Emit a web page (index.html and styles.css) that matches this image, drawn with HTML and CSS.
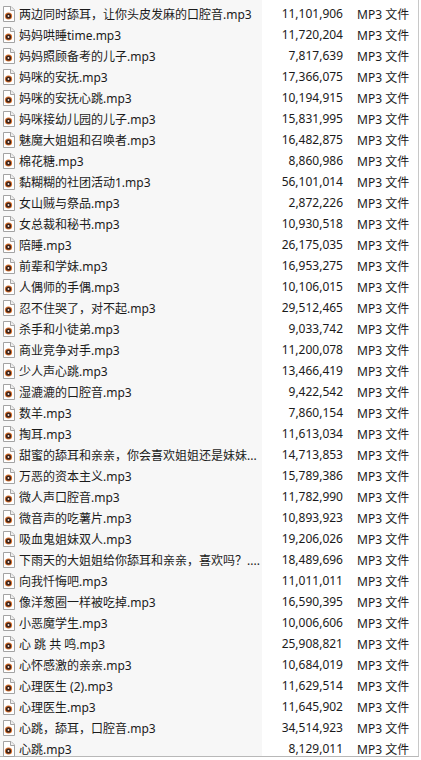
FILE: index.html
```html
<!DOCTYPE html>
<html>
<head>
<meta charset="utf-8">
<link rel="stylesheet" href="styles.css">
</head>
<body>
<svg width="0" height="0" class="defs">
  <symbol id="mp3" viewBox="0 0 16 16">
    <path d="M2.5 0.5h7.5l3.5 3.5v11.5h-11z" fill="#fff" stroke="#a3a3a3"/>
    <path d="M9.5 0.5v4h4" fill="#f0f0f0" stroke="#a3a3a3"/>
    <circle cx="7.5" cy="10" r="3.6" fill="#d8702c"/>
    <circle cx="7.5" cy="10" r="2.6" fill="#3b2219"/>
    <circle cx="7.5" cy="10" r="0.9" fill="#f4e4dc"/>
  </symbol>
</svg>
<div class="list">
  <div class="row"><div class="name"><svg class="icon" width="16" height="16"><use href="#mp3"/></svg><span class="label">两边同时舔耳，让你头皮发麻的口腔音.mp3</span></div><div class="size">11,101,906</div><div class="type">MP3 文件</div></div>
  <div class="row"><div class="name"><svg class="icon" width="16" height="16"><use href="#mp3"/></svg><span class="label">妈妈哄睡time.mp3</span></div><div class="size">11,720,204</div><div class="type">MP3 文件</div></div>
  <div class="row"><div class="name"><svg class="icon" width="16" height="16"><use href="#mp3"/></svg><span class="label">妈妈照顾备考的儿子.mp3</span></div><div class="size">7,817,639</div><div class="type">MP3 文件</div></div>
  <div class="row"><div class="name"><svg class="icon" width="16" height="16"><use href="#mp3"/></svg><span class="label">妈咪的安抚.mp3</span></div><div class="size">17,366,075</div><div class="type">MP3 文件</div></div>
  <div class="row"><div class="name"><svg class="icon" width="16" height="16"><use href="#mp3"/></svg><span class="label">妈咪的安抚心跳.mp3</span></div><div class="size">10,194,915</div><div class="type">MP3 文件</div></div>
  <div class="row"><div class="name"><svg class="icon" width="16" height="16"><use href="#mp3"/></svg><span class="label">妈咪接幼儿园的儿子.mp3</span></div><div class="size">15,831,995</div><div class="type">MP3 文件</div></div>
  <div class="row"><div class="name"><svg class="icon" width="16" height="16"><use href="#mp3"/></svg><span class="label">魅魔大姐姐和召唤者.mp3</span></div><div class="size">16,482,875</div><div class="type">MP3 文件</div></div>
  <div class="row"><div class="name"><svg class="icon" width="16" height="16"><use href="#mp3"/></svg><span class="label">棉花糖.mp3</span></div><div class="size">8,860,986</div><div class="type">MP3 文件</div></div>
  <div class="row"><div class="name"><svg class="icon" width="16" height="16"><use href="#mp3"/></svg><span class="label">黏糊糊的社团活动1.mp3</span></div><div class="size">56,101,014</div><div class="type">MP3 文件</div></div>
  <div class="row"><div class="name"><svg class="icon" width="16" height="16"><use href="#mp3"/></svg><span class="label">女山贼与祭品.mp3</span></div><div class="size">2,872,226</div><div class="type">MP3 文件</div></div>
  <div class="row"><div class="name"><svg class="icon" width="16" height="16"><use href="#mp3"/></svg><span class="label">女总裁和秘书.mp3</span></div><div class="size">10,930,518</div><div class="type">MP3 文件</div></div>
  <div class="row"><div class="name"><svg class="icon" width="16" height="16"><use href="#mp3"/></svg><span class="label">陪睡.mp3</span></div><div class="size">26,175,035</div><div class="type">MP3 文件</div></div>
  <div class="row"><div class="name"><svg class="icon" width="16" height="16"><use href="#mp3"/></svg><span class="label">前辈和学妹.mp3</span></div><div class="size">16,953,275</div><div class="type">MP3 文件</div></div>
  <div class="row"><div class="name"><svg class="icon" width="16" height="16"><use href="#mp3"/></svg><span class="label">人偶师的手偶.mp3</span></div><div class="size">10,106,015</div><div class="type">MP3 文件</div></div>
  <div class="row"><div class="name"><svg class="icon" width="16" height="16"><use href="#mp3"/></svg><span class="label">忍不住哭了，对不起.mp3</span></div><div class="size">29,512,465</div><div class="type">MP3 文件</div></div>
  <div class="row"><div class="name"><svg class="icon" width="16" height="16"><use href="#mp3"/></svg><span class="label">杀手和小徒弟.mp3</span></div><div class="size">9,033,742</div><div class="type">MP3 文件</div></div>
  <div class="row"><div class="name"><svg class="icon" width="16" height="16"><use href="#mp3"/></svg><span class="label">商业竞争对手.mp3</span></div><div class="size">11,200,078</div><div class="type">MP3 文件</div></div>
  <div class="row"><div class="name"><svg class="icon" width="16" height="16"><use href="#mp3"/></svg><span class="label">少人声心跳.mp3</span></div><div class="size">13,466,419</div><div class="type">MP3 文件</div></div>
  <div class="row"><div class="name"><svg class="icon" width="16" height="16"><use href="#mp3"/></svg><span class="label">湿漉漉的口腔音.mp3</span></div><div class="size">9,422,542</div><div class="type">MP3 文件</div></div>
  <div class="row"><div class="name"><svg class="icon" width="16" height="16"><use href="#mp3"/></svg><span class="label">数羊.mp3</span></div><div class="size">7,860,154</div><div class="type">MP3 文件</div></div>
  <div class="row"><div class="name"><svg class="icon" width="16" height="16"><use href="#mp3"/></svg><span class="label">掏耳.mp3</span></div><div class="size">11,613,034</div><div class="type">MP3 文件</div></div>
  <div class="row"><div class="name"><svg class="icon" width="16" height="16"><use href="#mp3"/></svg><span class="label">甜蜜的舔耳和亲亲，你会喜欢姐姐还是妹妹...</span></div><div class="size">14,713,853</div><div class="type">MP3 文件</div></div>
  <div class="row"><div class="name"><svg class="icon" width="16" height="16"><use href="#mp3"/></svg><span class="label">万恶的资本主义.mp3</span></div><div class="size">15,789,386</div><div class="type">MP3 文件</div></div>
  <div class="row"><div class="name"><svg class="icon" width="16" height="16"><use href="#mp3"/></svg><span class="label">微人声口腔音.mp3</span></div><div class="size">11,782,990</div><div class="type">MP3 文件</div></div>
  <div class="row"><div class="name"><svg class="icon" width="16" height="16"><use href="#mp3"/></svg><span class="label">微音声的吃薯片.mp3</span></div><div class="size">10,893,923</div><div class="type">MP3 文件</div></div>
  <div class="row"><div class="name"><svg class="icon" width="16" height="16"><use href="#mp3"/></svg><span class="label">吸血鬼姐妹双人.mp3</span></div><div class="size">19,206,026</div><div class="type">MP3 文件</div></div>
  <div class="row"><div class="name"><svg class="icon" width="16" height="16"><use href="#mp3"/></svg><span class="label">下雨天的大姐姐给你舔耳和亲亲，喜欢吗？....</span></div><div class="size">18,489,696</div><div class="type">MP3 文件</div></div>
  <div class="row"><div class="name"><svg class="icon" width="16" height="16"><use href="#mp3"/></svg><span class="label">向我忏悔吧.mp3</span></div><div class="size">11,011,011</div><div class="type">MP3 文件</div></div>
  <div class="row"><div class="name"><svg class="icon" width="16" height="16"><use href="#mp3"/></svg><span class="label">像洋葱圈一样被吃掉.mp3</span></div><div class="size">16,590,395</div><div class="type">MP3 文件</div></div>
  <div class="row"><div class="name"><svg class="icon" width="16" height="16"><use href="#mp3"/></svg><span class="label">小恶魔学生.mp3</span></div><div class="size">10,006,606</div><div class="type">MP3 文件</div></div>
  <div class="row"><div class="name"><svg class="icon" width="16" height="16"><use href="#mp3"/></svg><span class="label">心 跳 共 鸣.mp3</span></div><div class="size">25,908,821</div><div class="type">MP3 文件</div></div>
  <div class="row"><div class="name"><svg class="icon" width="16" height="16"><use href="#mp3"/></svg><span class="label">心怀感激的亲亲.mp3</span></div><div class="size">10,684,019</div><div class="type">MP3 文件</div></div>
  <div class="row"><div class="name"><svg class="icon" width="16" height="16"><use href="#mp3"/></svg><span class="label">心理医生 (2).mp3</span></div><div class="size">11,629,514</div><div class="type">MP3 文件</div></div>
  <div class="row"><div class="name"><svg class="icon" width="16" height="16"><use href="#mp3"/></svg><span class="label">心理医生.mp3</span></div><div class="size">11,645,902</div><div class="type">MP3 文件</div></div>
  <div class="row"><div class="name"><svg class="icon" width="16" height="16"><use href="#mp3"/></svg><span class="label">心跳，舔耳，口腔音.mp3</span></div><div class="size">34,514,923</div><div class="type">MP3 文件</div></div>
  <div class="row"><div class="name"><svg class="icon" width="16" height="16"><use href="#mp3"/></svg><span class="label">心跳.mp3</span></div><div class="size">8,129,011</div><div class="type">MP3 文件</div></div>
</div>
</body>
</html>
```

FILE: styles.css
```css
html, body {
  margin: 0;
  padding: 0;
  background: #fff;
}
body {
  font-family: "Noto Sans", "Noto Sans CJK SC", sans-serif;
  font-size: 12px;
  color: #1b1b1b;
  width: 421px;
  height: 760px;
  overflow: hidden;
}
.defs {
  position: absolute;
}
.list {
  width: 419px;
  height: 757px;
  border-right: 1px solid #c8c8c8;
  border-bottom: 1px solid #b8b8b8;
  box-sizing: border-box;
  padding-top: 3px;
  background: linear-gradient(to right, #f7f7f7 0, #f7f7f7 262px, #fff 262px);
}
.row {
  display: grid;
  grid-template-columns: 262px 81px 66px;
  height: 21px;
  align-items: center;
}
.name {
  display: flex;
  align-items: center;
  min-width: 0;
  height: 21px;
}
.icon {
  flex: none;
  margin: 0 2px 0 1px;
}
.label {
  white-space: nowrap;
  overflow: hidden;
  padding-right: 6px;
}
.size {
  text-align: right;
  white-space: nowrap;
}
.type {
  padding-left: 14px;
  white-space: nowrap;
}
```
